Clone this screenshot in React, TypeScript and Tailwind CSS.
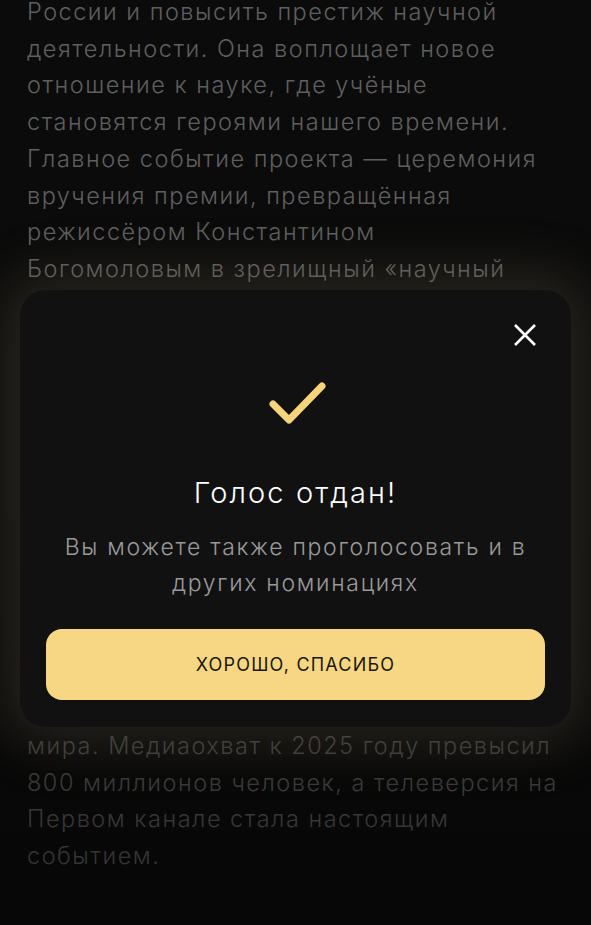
import React from 'react';

const topLines = [
  'России и повысить престиж научной',
  'деятельности. Она воплощает новое',
  'отношение к науке, где учёные',
  'становятся героями нашего времени.',
  'Главное событие проекта — церемония',
  'вручения премии, превращённая',
  'режиссёром Константином',
  'Богомоловым в зрелищный «научный',
  'оскар», который ежегодно собирает',
  'ведущих учёных, деятелей культуры',
  'и искусства. Церемония проходит',
  'в Государственном Кремлёвском',
  'дворце, а её трансляцию смотрят',
  'зрители по всей стране и за её',
  'пределами. За годы существования',
  'премия стала одним из самых',
  'заметных событий в научной жизни',
  'страны, объединяя исследователей,',
  'популяризаторов науки и зрителей',
  'из разных уголков России и',
];

const bottomLines = [
  'мира. Медиаохват к 2025 году превысил',
  '800 миллионов человек, а телеверсия на',
  'Первом канале стала настоящим',
  'событием.',
];

const App: React.FC = () => {
  return (
    <div className="relative w-[591px] h-[925px] overflow-hidden bg-[#0b0b0b] font-[Inter,sans-serif]">
      <div className="px-[27px] -mt-[6px] text-[23.5px] leading-[36.7px] font-light tracking-[1.5px]">
        {topLines.map((l) => (
          <div key={l} className="whitespace-nowrap text-[#5f5f5f]">
            {l}
          </div>
        ))}
        {bottomLines.map((l) => (
          <div key={l} className="whitespace-nowrap text-[#4f4f4f]">
            {l}
          </div>
        ))}
      </div>

      <div className="absolute inset-0 bg-gradient-to-b from-transparent via-transparent to-black/40" />

      <div className="absolute left-[20px] top-[290px] w-[551px] rounded-[26px] bg-[#111111] px-[26px] pt-[89px] pb-[27px] flex flex-col items-center shadow-[0_0_55px_14px_rgba(110,100,78,0.32)]">
        <button className="absolute right-[34px] top-[33px] w-[24px] h-[24px] flex items-center justify-center">
          <svg width="24" height="24" viewBox="0 0 24 24" fill="none">
            <path d="M2 2L22 22M22 2L2 22" stroke="#ffffff" strokeWidth="2.6" />
          </svg>
        </button>

        <svg width="64" height="48" viewBox="0 0 64 48" fill="none">
          <path
            d="M9 25L25 41L58 7"
            stroke="#f6d47c"
            strokeWidth="7"
            strokeLinecap="round"
            strokeLinejoin="round"
          />
        </svg>

        <h2 className="mt-[48px] text-[29px] leading-[36px] font-light text-white tracking-[2.1px]">
          Голос отдан!
        </h2>
        <p className="mt-[18px] text-center text-[23px] leading-[36px] font-light text-[#9a9a9a] tracking-[1.7px]">
          Вы можете также проголосовать и в
          <br />
          других номинациях
        </p>

        <button className="mt-[28px] w-full h-[71px] rounded-[16px] bg-[#f7d783] text-[18px] text-[#1a1712] tracking-[1.2px]">
          ХОРОШО, СПАСИБО
        </button>
      </div>
    </div>
  );
};

export default App;
